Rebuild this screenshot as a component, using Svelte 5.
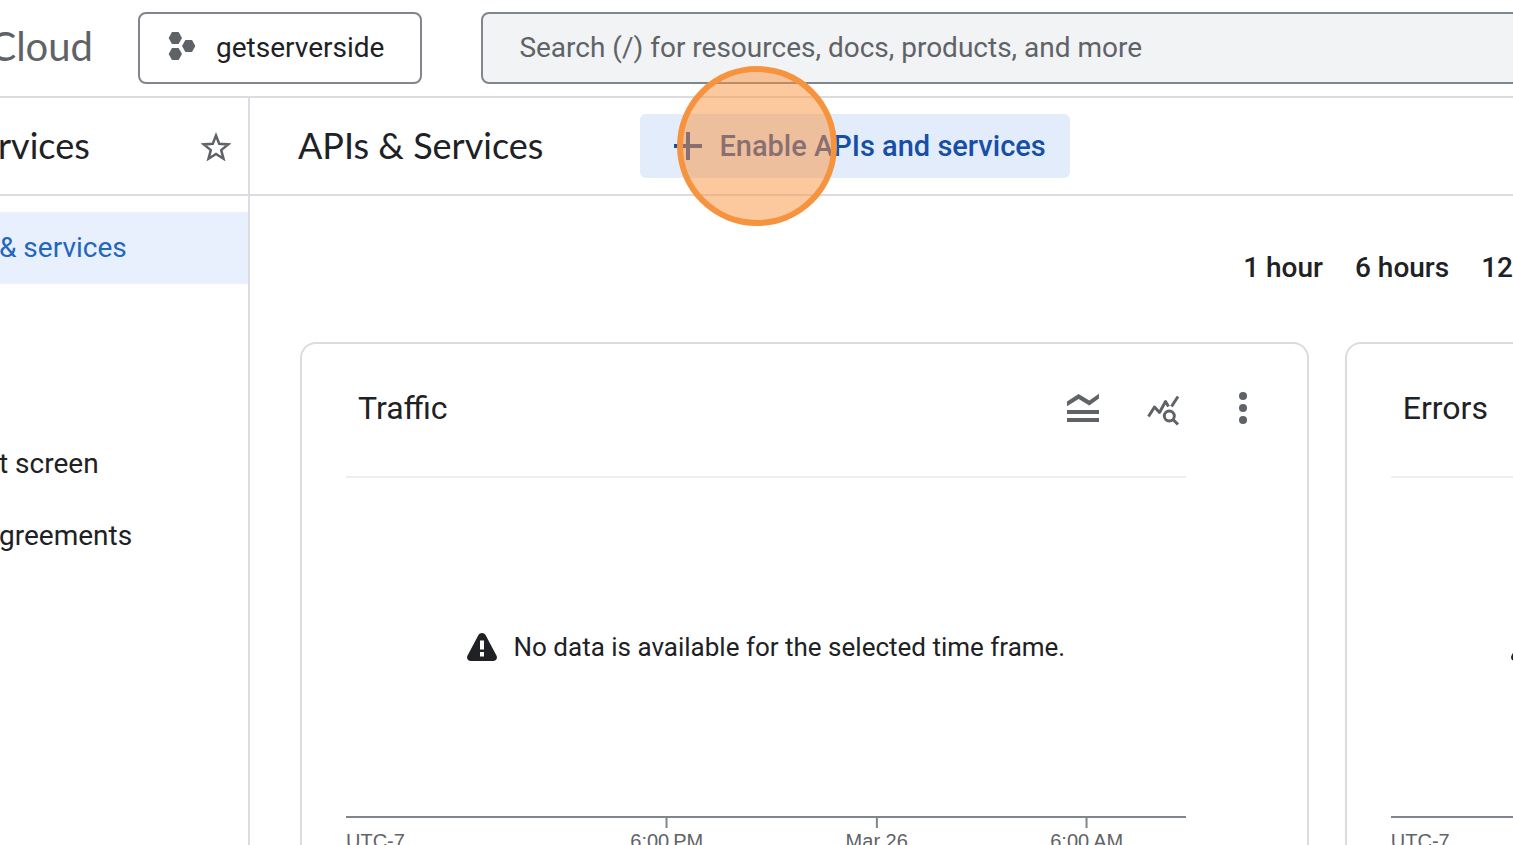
<script lang="ts">
	type Tick = { label: string; at: number };

	const navGroups = [
		[{ label: '& services', active: true }],
		[
			{ label: 't screen', active: false },
			{ label: 'greements', active: false }
		]
	];

	const ranges = ['1 hour', '6 hours', '12'];

	const cards = ['Traffic', 'Errors'];

	// Tick positions are percentages of the axis width
	const ticks: Tick[] = [
		{ label: '6:00\u202fPM', at: 38.2 },
		{ label: 'Mar 26', at: 63.2 },
		{ label: '6:00\u202fAM', at: 88.2 }
	];

	let search = $state('');
</script>

<div class="page">
	<header class="topbar">
		<span class="brand">Cloud</span>
		<button class="project" type="button">
			<svg class="project-icon" viewBox="0 0 28 30" aria-hidden="true">
				<path d="M4 0h6.600l3.400 6-3.400 6H4L.6 6z" />
				<path d="M4 16h6.600l3.400 6-3.400 6H4L.6 22z" />
				<path d="M17.400 8H24l3.400 6-3.400 6h-6.600L14 14z" />
			</svg>
			<span>getserverside</span>
		</button>
		<input
			class="search"
			type="text"
			aria-label="Search"
			placeholder="Search (/) for resources, docs, products, and more"
			bind:value={search}
		/>
	</header>

	<div class="body">
		<aside class="sidebar">
			<div class="sidebar-head">
				<span class="title">rvices</span>
				<button class="icon-btn" type="button" aria-label="Pin">
					<svg class="star" viewBox="0 0 30 30" aria-hidden="true">
						<path d="M15 4.500l3.200 8.300 9 .6-7 5.700 2.300 8.600L15 23 7.500 27.700l2.300-8.600-7-5.700 9-.6z" />
					</svg>
				</button>
			</div>
			<nav class="nav">
				{#each navGroups as group}
					<div class="nav-group">
						{#each group as item}
							<a class="nav-item" class:active={item.active} href="#nav">{item.label}</a>
						{/each}
					</div>
				{/each}
			</nav>
		</aside>

		<main class="main">
			<div class="main-head">
				<h1 class="title">APIs &amp; Services</h1>
				<div class="enable-wrap">
					<button class="enable" type="button">
						<svg class="plus" viewBox="0 0 28 28" aria-hidden="true">
							<path d="M14 0v28M0 14h28" />
						</svg>
						<span>Enable APIs and services</span>
					</button>
					<span class="marker"></span>
				</div>
			</div>

			<div class="ranges">
				{#each ranges as range}
					<button class="range" type="button">{range}</button>
				{/each}
			</div>

			<div class="cards">
				{#each cards as card}
					<section class="card">
						<div class="card-head">
							<h2>{card}</h2>
							<div class="tools">
								<button class="icon-btn" type="button" aria-label="Legend">
									<svg viewBox="0 0 36 36" aria-hidden="true">
										<path d="M2 11.500L13.600 4l10.700 6.500L34 3.800v4.700l-9.700 7-10.700-6.600L2 16.200z" />
										<path class="line thick" d="M2 22h32M2 30h32" />
									</svg>
								</button>
								<button class="icon-btn" type="button" aria-label="Explore data">
									<svg viewBox="0 0 36 36" aria-hidden="true">
										<path class="line" d="M3.500 26.500l6-9.500 5 5.500 6-11 3 5M26.500 16.500l6.500-10" />
										<circle class="line" cx="24.300" cy="26" r="5" />
										<path class="line" d="M28 29.500l5 5" />
									</svg>
								</button>
								<button class="icon-btn" type="button" aria-label="More options">
									<svg viewBox="0 0 36 36" aria-hidden="true">
										<circle cx="18" cy="6" r="4" />
										<circle cx="18" cy="18" r="4" />
										<circle cx="18" cy="30" r="4" />
									</svg>
								</button>
							</div>
						</div>
						<div class="chart">
							<p class="empty">
								<svg class="warning" viewBox="0 0 30 28" aria-hidden="true">
									<path d="M11.300 2.200C13-.7 17-.7 18.700 2.200l10.600 20C30.900 25 29.300 28 26 28H4C.7 28-.9 25 .7 22.200z" />
									<path class="mark" d="M13 7.500h4v9h-4zM13 19h4v4.500h-4z" />
								</svg>
								<span>No data is available for the selected time frame.</span>
							</p>
						</div>
						<div class="axis">
							<span class="zone">UTC-7</span>
							{#each ticks as tick}
								<span class="tick" style="left: {tick.at}%">{tick.label}</span>
							{/each}
						</div>
					</section>
				{/each}
			</div>
		</main>
	</div>
</div>

<style>
	:global(body) {
		background: #fff;
	}

	.page {
		display: flex;
		flex-direction: column;
		height: 100vh;
		overflow: hidden;
		color: #202124;
		font-family: Roboto, 'Liberation Sans', sans-serif;
		font-size: 28px;
	}

	button {
		padding: 0;
		border: none;
		background: none;
		color: inherit;
		font: inherit;
		cursor: pointer;
	}

	.topbar {
		display: flex;
		flex: none;
		align-items: center;
		height: 96px;
		border-bottom: 2px solid #dadce0;
	}

	.brand {
		display: flex;
		flex: none;
		justify-content: flex-end;
		width: 93px;
		padding-bottom: 4px;
		color: #5f6368;
		font-family: Lato, sans-serif;
		font-size: 40px;
	}

	.project {
		display: flex;
		flex: none;
		align-items: center;
		gap: 20px;
		box-sizing: border-box;
		height: 72px;
		margin-left: 45px;
		padding: 0 36px 2px 28px;
		border: 2px solid #80868b;
		border-radius: 8px;
	}

	.project-icon {
		width: 28px;
		height: 30px;
		fill: #5f6368;
	}

	.search {
		flex: 1;
		box-sizing: border-box;
		min-width: 0;
		height: 72px;
		margin: 0 -8px 0 59px;
		padding: 0 36px 2px;
		border: 2px solid #80868b;
		border-radius: 8px;
		background: #f1f3f4;
		color: #202124;
		font: inherit;
	}

	.search::placeholder {
		color: #5f6368;
		opacity: 1;
	}

	.body {
		display: flex;
		flex: 1;
		min-height: 0;
	}

	.sidebar {
		flex: none;
		width: 248px;
		border-right: 2px solid #dadce0;
	}

	.sidebar-head,
	.main-head {
		display: flex;
		align-items: center;
		height: 96px;
		border-bottom: 2px solid #dadce0;
	}

	.sidebar-head {
		justify-content: space-between;
		padding-right: 17px;
		text-indent: -2px;
	}

	.title {
		margin: 0;
		padding-bottom: 2px;
		font-family: Lato, sans-serif;
		font-size: 36px;
		font-weight: 400;
		white-space: nowrap;
	}

	.icon-btn {
		display: flex;
	}

	.icon-btn svg {
		width: 36px;
		height: 36px;
		fill: #5f6368;
	}

	.icon-btn .star {
		width: 30px;
		height: 30px;
		fill: none;
		stroke: #5f6368;
		stroke-width: 2.5;
	}

	.icon-btn .line {
		fill: none;
		stroke: #5f6368;
		stroke-linejoin: round;
		stroke-width: 3;
	}

	.icon-btn .thick {
		stroke-width: 4;
	}

	.nav {
		display: flex;
		flex-direction: column;
		gap: 144px;
		padding-top: 16px;
	}

	.nav-item {
		display: flex;
		align-items: center;
		box-sizing: border-box;
		height: 72px;
		padding-bottom: 2px;
		color: #202124;
		text-decoration: none;
		text-indent: -1px;
	}

	.nav-item.active {
		background: #e8f0fe;
		color: #2367bd;
	}

	.main {
		flex: 1;
		min-width: 0;
	}

	.main-head {
		gap: 97px;
		padding-left: 48px;
	}

	.enable-wrap {
		position: relative;
	}

	.enable {
		display: flex;
		align-items: center;
		gap: 17px;
		height: 64px;
		padding: 0 24px 0 34px;
		border-radius: 6px;
		background: #e3ecfb;
		color: #174ea6;
		font-size: 29px;
		font-weight: 500;
		white-space: nowrap;
	}

	.plus {
		width: 28px;
		height: 28px;
		fill: none;
		stroke: currentColor;
		stroke-width: 4;
	}

	.marker {
		position: absolute;
		top: -48px;
		left: 37px;
		box-sizing: border-box;
		width: 160px;
		height: 160px;
		border: 6px solid #f6933e;
		border-radius: 50%;
		background: rgba(250, 145, 62, 0.5);
		pointer-events: none;
	}

	.ranges {
		display: flex;
		justify-content: flex-end;
		gap: 32px;
		padding-top: 47px;
	}

	.range {
		height: 48px;
		font-weight: 500;
	}

	.cards {
		display: grid;
		grid-template-columns: repeat(2, calc(83% + 2px));
		gap: 36px;
		padding: 51px 0 0 50px;
	}

	.card {
		box-sizing: border-box;
		padding: 0 121px 24px 44px;
		border: 2px solid #dadce0;
		border-radius: 16px;
	}

	.card-head {
		display: flex;
		align-items: center;
		justify-content: space-between;
		height: 128px;
		margin: 0 -75px 4px 0;
		padding-left: 12px;
	}

	.card-head h2 {
		margin: 0;
		font-size: 32px;
		font-weight: 400;
	}

	.tools {
		display: flex;
		gap: 44px;
	}

	.chart {
		display: flex;
		align-items: center;
		justify-content: center;
		height: 338px;
		border-top: 2px solid #eeeeef;
	}

	.empty {
		display: flex;
		align-items: center;
		gap: 17px;
		margin: 0;
		font-size: 26px;
		white-space: nowrap;
	}

	.warning {
		width: 30px;
		height: 28px;
		fill: #202124;
	}

	.warning .mark {
		fill: #fff;
	}

	.axis {
		position: relative;
		height: 48px;
		border-top: 2px solid #80868b;
		color: #5f6368;
		font-family: 'Liberation Sans', sans-serif;
		font-size: 20px;
		line-height: 24px;
	}

	.zone {
		display: block;
		padding-top: 11px;
	}

	.tick {
		position: absolute;
		top: 0;
		padding-top: 11px;
		transform: translateX(-50%);
		white-space: nowrap;
	}

	.tick::before {
		content: '';
		position: absolute;
		top: 0;
		left: 50%;
		width: 2px;
		height: 10px;
		margin-left: -1px;
		background: #80868b;
	}
</style>
